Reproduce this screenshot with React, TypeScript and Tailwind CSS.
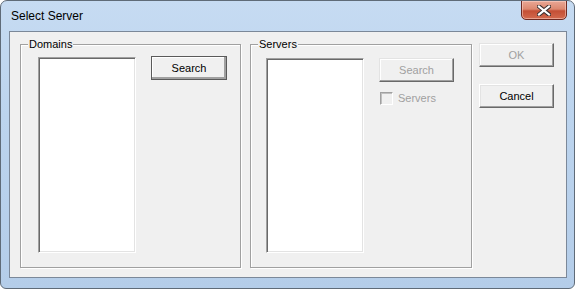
import React from 'react';

const font = { fontFamily: '"Liberation Sans", Arial, sans-serif' };

const CloseGlyph: React.FC = () => (
  <svg width="14" height="11" viewBox="0 0 14 11">
    <path d="M2 1.5 L12 9.5 M12 1.5 L2 9.5" stroke="#3b3030" strokeWidth="4.2" strokeLinecap="square" />
    <path d="M2 1.5 L12 9.5 M12 1.5 L2 9.5" stroke="#ffffff" strokeWidth="2.2" strokeLinecap="square" />
  </svg>
);

interface BtnProps {
  label: string;
  disabled?: boolean;
  isDefault?: boolean;
  className?: string;
}

const Button: React.FC<BtnProps> = ({ label, disabled, isDefault, className }) => {
  if (disabled) {
    return (
      <div
        className={`flex items-center justify-center bg-[#f0f0f0] border border-t-[#e3e3e3] border-l-[#e3e3e3] border-b-[#696969] border-r-[#696969] shadow-[inset_-1px_-1px_0_#a0a0a0,inset_1px_1px_0_#ffffff] text-[11px] text-[#a0a0a0] ${className ?? ''}`}
      >
        {label}
      </div>
    );
  }
  return (
    <div
      className={`flex items-center justify-center bg-[#f0f0f0] border ${
        isDefault
          ? 'border-[#5a5a5a] shadow-[inset_-2px_-2px_0_#a0a0a0,inset_1px_1px_0_#ffffff]'
          : 'border-t-[#ffffff] border-l-[#ffffff] border-b-[#696969] border-r-[#696969] shadow-[inset_-1px_-1px_0_#a0a0a0,inset_1px_1px_0_#e3e3e3]'
      } text-[11px] text-black ${className ?? ''}`}
    >
      {label}
    </div>
  );
};

const ListBox: React.FC<{ className?: string }> = ({ className }) => (
  <div
    className={`bg-white border border-t-[#a0a0a0] border-l-[#a0a0a0] border-b-[#ffffff] border-r-[#ffffff] shadow-[inset_1px_1px_0_#696969,inset_-1px_-1px_0_#e3e3e3] ${className ?? ''}`}
  />
);

const GroupBox: React.FC<{ title: string; className?: string; children: React.ReactNode }> = ({
  title,
  className,
  children,
}) => (
  <div
    className={`relative border border-[#a0a0a0] shadow-[1px_1px_0_#ffffff,inset_1px_1px_0_#ffffff] ${className ?? ''}`}
  >
    <span className="absolute left-[7px] top-[-8px] bg-[#f0f0f0] px-[1px] text-[11px] leading-[14px] text-black">
      {title}
    </span>
    {children}
  </div>
);

export default function App() {
  return (
    <div className="w-[575px] h-[290px] bg-white" style={font}>
      <div className="w-[575px] h-[289px] flex flex-col rounded-t-[7px] rounded-b-[6px] border border-[#5f6b78] bg-[linear-gradient(180deg,#c6dbf2_0%,#bcd4ee_40%,#b4cde9_100%)] overflow-hidden">
        {/* title bar */}
        <div className="h-[30px] flex items-start justify-between">
          <span className="ml-[10px] mt-[8px] text-[12px] leading-[14px] text-black">Select Server</span>
          <div className="mr-[7px] mt-[-1px] w-[46px] h-[20px] rounded-b-[5px] border border-[#6e2a22] bg-[linear-gradient(180deg,#e9a795_0%,#dc8870_45%,#c44f35_55%,#d36a4e_100%)] shadow-[inset_0_0_0_1px_rgba(255,220,210,0.5)] flex items-center justify-center">
            <CloseGlyph />
          </div>
        </div>
        {/* client area */}
        <div className="ml-[8px] mr-[7px] h-[247px] border border-[#7b8899] bg-[#f0f0f0] flex items-start pl-[10px]">
          <GroupBox title="Domains" className="mt-[12px] w-[221px] h-[224px] flex items-start pl-[17px] pt-[12px]">
            <ListBox className="w-[98px] h-[196px]" />
            <Button label="Search" isDefault className="ml-[15px] mt-[-1px] w-[76px] h-[24px]" />
          </GroupBox>
          <GroupBox title="Servers" className="ml-[9px] mt-[12px] w-[222px] h-[224px] flex items-start pl-[15px] pt-[13px]">
            <ListBox className="w-[98px] h-[195px]" />
            <div className="ml-[15px] flex flex-col">
              <Button label="Search" disabled className="w-[75px] h-[24px]" />
              <div className="mt-[10px] ml-[1px] flex items-center">
                <span className="w-[13px] h-[13px] border border-t-[#a0a0a0] border-l-[#a0a0a0] border-b-[#ffffff] border-r-[#ffffff] shadow-[inset_1px_1px_0_#c0c0c0] bg-[#f0f0f0]" />
                <span className="ml-[5px] text-[11px] leading-[13px] text-[#a0a0a0]">Servers</span>
              </div>
            </div>
          </GroupBox>
          <div className="ml-[7px] mt-[11px] flex flex-col">
            <Button label="OK" disabled className="w-[75px] h-[24px]" />
            <Button label="Cancel" className="mt-[17px] w-[75px] h-[24px]" />
          </div>
        </div>
      </div>
    </div>
  );
}
